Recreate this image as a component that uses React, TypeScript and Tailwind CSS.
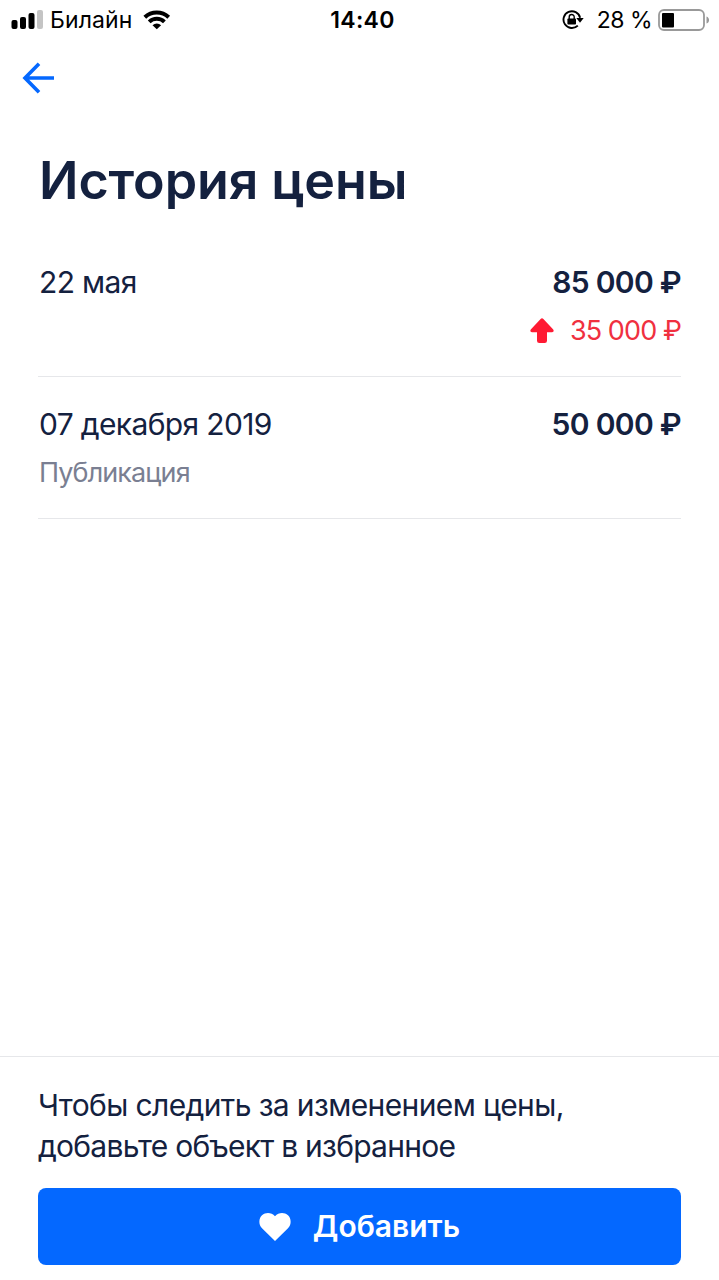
type PriceEntry = {
  date: string;
  price: string;
  diff?: string;
  note?: string;
};

const history: PriceEntry[] = [
  { date: "22 мая", price: "85 000 ₽", diff: "35 000 ₽" },
  { date: "07 декабря 2019", price: "50 000 ₽", note: "Публикация" },
];

function StatusBar() {
  return (
    <div className="grid h-10 grid-cols-[1fr_auto_1fr] items-center pl-[11px] pr-[9px] text-black">
      <div className="flex items-center">
        {/* Signal */}
        <svg className="h-5 w-8" viewBox="0 0 32 20">
          <rect x="0.5" y="10" width="6" height="9" rx="2" />
          <rect x="9" y="7" width="6" height="12" rx="2" />
          <rect x="17.5" y="3" width="6" height="16" rx="2" />
          <rect x="26" y="0" width="6" height="19" rx="2" fill="#c4c4c4" />
        </svg>
        <span className="ml-[7px] text-[23px] leading-10 tracking-[0.1px]">Билайн</span>
        {/* Wi-Fi */}
        <svg className="ml-[11px] h-5 w-7" viewBox="0 0 28 20" fill="none" stroke="#000" strokeWidth="4">
          <path d="M1.8 7.200a17.400 17.400 0 0 1 23.900 0" />
          <path d="M6.200 11.900a11 11 0 0 1 15.200 0" />
          <path d="M13.800 19.200l-4.300-4a6.200 6.200 0 0 1 8.600 0z" fill="#000" stroke="none" />
        </svg>
      </div>
      <span className="pl-1 text-[23px] font-semibold leading-10 tracking-[0.3px]">14:40</span>
      <div className="flex items-center justify-end">
        {/* Rotation lock */}
        <svg className="h-5 w-[22px]" viewBox="0 0 22 20">
          <path d="M15.800 15.600a8.400 8.400 0 1 1 2.300-7.800" fill="none" stroke="#000" strokeWidth="1.9" />
          <path d="M14.300 8h7.400L18 12.800z" />
          <rect x="5.400" y="8.600" width="8.600" height="6" rx="0.8" />
          <path d="M7.200 9V7a2.500 2.500 0 0 1 5 0v2" fill="none" stroke="#000" strokeWidth="1.4" />
        </svg>
        <span className="ml-[13px] whitespace-nowrap text-[23px] leading-10 tracking-[-0.5px]">28 %</span>
        {/* Battery */}
        <svg className="ml-[6px] h-[22px] w-[52px]" viewBox="0 0 52 22">
          <rect x="1" y="1" width="45" height="20" rx="5" fill="none" stroke="#999" strokeWidth="1.8" />
          <rect x="4" y="4" width="12" height="14.500" rx="1" />
          <path d="M48.500 7.500c3.400 1.200 3.400 6 0 7z" fill="#999" />
        </svg>
      </div>
    </div>
  );
}

function HistoryRow({ date, price, diff, note }: PriceEntry) {
  return (
    <li className="flex h-[142px] justify-between border-b border-[#e6e7ea] pt-[27px]">
      <div className="pl-px">
        <div className="text-[30px] leading-10 tracking-[-0.65px]">{date}</div>
        {note && <div className="mt-[9px] text-[27px] leading-10 tracking-[-0.9px] text-[#7a7f92]">{note}</div>}
      </div>
      <div className="flex flex-col items-end whitespace-nowrap">
        <div className="text-[30px] font-semibold leading-10 tracking-[-0.7px]">{price}</div>
        {diff && (
          <div className="mt-[9px] flex items-center text-[27px] leading-10 tracking-[-0.9px] text-[#f0303f]">
            <svg className="mr-4 h-[26px] w-6" viewBox="0 0 24 26" fill="#ff1a33">
              <path d="M10.6.9 1 11.2C-.2 12.600.3 14.200 2 14.200h5v8.600a2.300 2.300 0 0 0 2.300 2.300h5.400a2.300 2.300 0 0 0 2.300-2.300v-8.600h5c1.700 0 2.200-1.600 1-3L13.400.9a1.900 1.900 0 0 0-2.800 0z" />
            </svg>
            {diff}
          </div>
        )}
      </div>
    </li>
  );
}

export default function App() {
  return (
    <div className="flex h-[1280px] w-[719px] flex-col overflow-hidden bg-white font-['Inter',sans-serif] text-[#14213f]">
      <StatusBar />

      <header className="flex h-[76px] items-center pl-[22px]">
        <button aria-label="Назад">
          <svg className="block h-8 w-8" viewBox="0 0 32 32" fill="none" stroke="#0468ff" strokeWidth="3.6">
            <path d="M17 1.800 3 16l14 14.200M3 16h29" />
          </svg>
        </button>
      </header>

      <main className="flex-1 px-[38px] pt-[33px]">
        <h1 className="pl-px text-[52px] font-semibold leading-[64px] tracking-[-0.1px]">История цены</h1>
        <ul className="mt-[22px]">
          {history.map((entry) => (
            <HistoryRow key={entry.date} {...entry} />
          ))}
        </ul>
      </main>

      <footer className="h-[224px] border-t border-[#e6e7ea] px-[38px] pt-7">
        <p className="text-[30px] leading-[41px] tracking-[-0.62px]">
          Чтобы следить за изменением цены,
          <br />
          <span className="tracking-[-0.75px]">добавьте объект в избранное</span>
        </p>
        <button className="mt-[21px] flex h-[77px] w-full items-center justify-center rounded-lg bg-[#0468ff] text-[30px] font-semibold text-white">
          <svg className="mr-[22px] h-7 w-8" viewBox="0 0 32 28" fill="currentColor">
            <path d="M16 28 3 15.200C-.8 11.300-.2 5.200 3 2.300 6.800-1 12.500-.6 16 3.200 19.500-.6 25.200-1 29 2.300c3.200 2.900 3.800 9 0 12.900z" />
          </svg>
          Добавить
        </button>
      </footer>
    </div>
  );
}
